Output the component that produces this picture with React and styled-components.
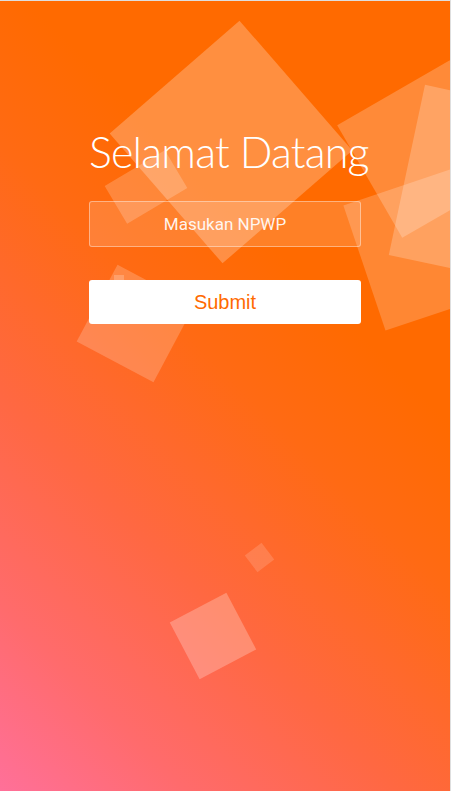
import React from "react";
import styled, { createGlobalStyle } from "styled-components";

const GlobalStyle = createGlobalStyle`
  html, body {
    margin: 0;
    padding: 0;
    background: #dedede;
  }
  * {
    box-sizing: border-box;
  }
`;

// floating squares behind the form: center x/y, size, rotation, opacity
const shapes = [
  { x: 231, y: 141, w: 172, h: 172, r: 49, a: 0.25 },
  { x: 426, y: 148, w: 130, h: 130, r: -30, a: 0.22 },
  { x: 492, y: 187, w: 174, h: 174, r: 12, a: 0.22 },
  { x: 427, y: 246, w: 132, h: 132, r: -18.6, a: 0.2 },
  { x: 146, y: 186, w: 70, h: 44, r: -30.7, a: 0.2 },
  { x: 135, y: 322, w: 87, h: 87, r: 28, a: 0.2 },
  { x: 119, y: 281, w: 10, h: 14, r: 0, a: 0.2 },
  { x: 259, y: 556, w: 21, h: 21, r: -37, a: 0.15 },
  { x: 213, y: 635, w: 64, h: 64, r: -27.8, a: 0.25 },
];

export default function App() {
  return (
    <>
      <GlobalStyle />
      <Page>
        <Backdrop>
          {shapes.map((s, i) => (
            <Square
              key={i}
              $w={s.w}
              $h={s.h}
              $r={s.r}
              $a={s.a}
              style={{ left: s.x - s.w / 2, top: s.y - s.h / 2 }}
            />
          ))}
        </Backdrop>

        <Form>
          <Title>Selamat Datang</Title>
          <Input placeholder="Masukan NPWP" />
          <SubmitButton>Submit</SubmitButton>
        </Form>
      </Page>
    </>
  );
}

const Page = styled.div`
  position: relative;
  width: 450px;
  height: 790px;
  margin-top: 1px;
  overflow: hidden;
  background: linear-gradient(
    45deg,
    #ff7099 0%,
    #ff6b6c 15%,
    #ff6842 32%,
    #ff6a14 52%,
    #ff6a00 66%
  );
`;

const Backdrop = styled.div`
  position: absolute;
  inset: 0;
  pointer-events: none;
`;

const Square = styled.div`
  position: absolute;
  width: ${(p) => p.$w}px;
  height: ${(p) => p.$h}px;
  background: rgba(255, 255, 255, ${(p) => p.$a});
  transform: rotate(${(p) => p.$r}deg);
`;

const Form = styled.div`
  position: relative;
  width: 272px;
  margin: 0 auto;
  padding-top: 124px;
  display: flex;
  flex-direction: column;
  align-items: stretch;
`;

const Title = styled.h1`
  margin: 0 0 22px;
  font-family: Lato, "Open Sans", sans-serif;
  font-weight: 300;
  font-size: 43px;
  line-height: 54px;
  letter-spacing: -0.8px;
  color: #fff;
  text-align: center;
  white-space: nowrap;
`;

const Input = styled.input`
  height: 46px;
  border: 1px solid rgba(255, 255, 255, 0.4);
  border-radius: 3px;
  background: rgba(255, 255, 255, 0.15);
  font-family: Roboto, "Noto Sans", sans-serif;
  font-size: 17px;
  color: #fff;
  text-align: center;
  outline: none;

  &::placeholder {
    color: rgba(255, 255, 255, 0.92);
  }
`;

const SubmitButton = styled.button`
  margin-top: 33px;
  height: 44px;
  border: none;
  border-radius: 3px;
  background: #fff;
  color: #ff6a00;
  font-family: "Liberation Sans", Arial, sans-serif;
  font-size: 20px;
  cursor: pointer;
`;
